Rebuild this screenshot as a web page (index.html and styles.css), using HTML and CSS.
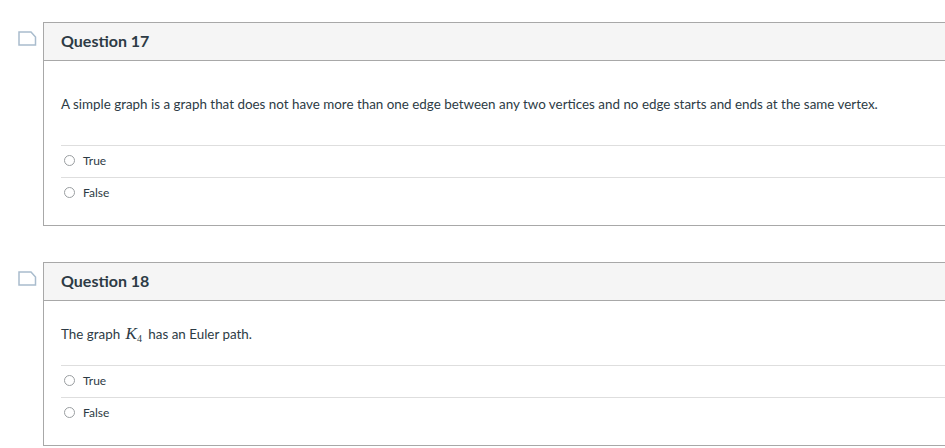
FILE: index.html
```html
<!DOCTYPE html>
<html>
<head>
<meta charset="utf-8">
<link rel="stylesheet" href="styles.css">
</head>
<body>
<div class="quiz">
  <div class="question">
    <div class="flag">
      <svg width="19" height="15" viewBox="0 0 19 15"><path d="M1 1 H13 L17.5 6 V14 H1 Z" fill="none" stroke="#a9bccd" stroke-width="1.5" stroke-linejoin="miter"/></svg>
    </div>
    <div class="card">
      <div class="card-header"><span class="title">Question 17</span></div>
      <div class="card-body first">
        <div class="qtext">A simple graph is a graph that does not have more than one edge between any two vertices and no edge starts and ends at the same vertex.</div>
        <div class="answers">
          <div class="answer"><span class="radio"></span><span class="label">True</span></div>
          <div class="answer"><span class="radio"></span><span class="label">False</span></div>
        </div>
      </div>
    </div>
  </div>
  <div class="question">
    <div class="flag">
      <svg width="19" height="15" viewBox="0 0 19 15"><path d="M1 1 H13 L17.5 6 V14 H1 Z" fill="none" stroke="#a9bccd" stroke-width="1.5" stroke-linejoin="miter"/></svg>
    </div>
    <div class="card">
      <div class="card-header"><span class="title">Question 18</span></div>
      <div class="card-body">
        <div class="qtext">The graph <span class="math"><i>K</i><sub>4</sub></span> has an Euler path.</div>
        <div class="answers">
          <div class="answer"><span class="radio"></span><span class="label">True</span></div>
          <div class="answer"><span class="radio"></span><span class="label">False</span></div>
        </div>
      </div>
    </div>
  </div>
</div>
</body>
</html>
```
FILE: styles.css
```css
* { box-sizing: border-box; }
html, body { margin: 0; padding: 0; background: #fff; overflow: hidden; }
body {
  font-family: Lato, "Noto Sans", sans-serif;
  color: #2d3b45;
  width: 945px;
  height: 448px;
}
.quiz {
  padding-top: 22px;
  display: flex;
  flex-direction: column;
  gap: 36px;
}
.question {
  display: flex;
}
.flag {
  width: 43px;
  flex: none;
  padding: 9px 0 0 18px;
}
.flag svg { display: block; }
.card {
  flex: none;
  width: 920px;
  border: 1px solid #a8a8a8;
  border-right: none;
}
.card-header {
  height: 38px;
  background: #f5f5f5;
  border-bottom: 1px solid #a8a8a8;
  padding: 0 0 3px 17px;
  display: flex;
  align-items: center;
}
.title {
  font-size: 16px;
  font-weight: 700;
  color: #2d3b45;
}
.card-body {
  padding: 23px 0 16px 17px;
}
.qtext {
  font-size: 13.4px;
  line-height: 20px;
  height: 20px;
  margin-bottom: 21px;
}
.card-body.first { padding-top: 33px; }
.card-body.first .qtext { margin-bottom: 31px; }
.answers {
  border-top: 1px solid #dedede;
}
.answer {
  height: 32px;
  border-bottom: 1px solid #dedede;
  display: flex;
  align-items: center;
  padding: 0 0 3px 3px;
}
.answer:last-child { border-bottom: none; height: 31px; }
.radio {
  width: 11px;
  height: 11px;
  border: 1px solid #9a9ea1;
  border-radius: 50%;
  margin-right: 8px;
}
.label {
  font-size: 12px;
}
.math {
  font-family: "Liberation Serif", "Times New Roman", serif;
  font-size: 17px;
  line-height: 0;
  margin: 0 3px 0 2px;
}
.math sub {
  font-style: normal;
  font-size: 10px;
  line-height: 0;
  vertical-align: -3px;
}
```
